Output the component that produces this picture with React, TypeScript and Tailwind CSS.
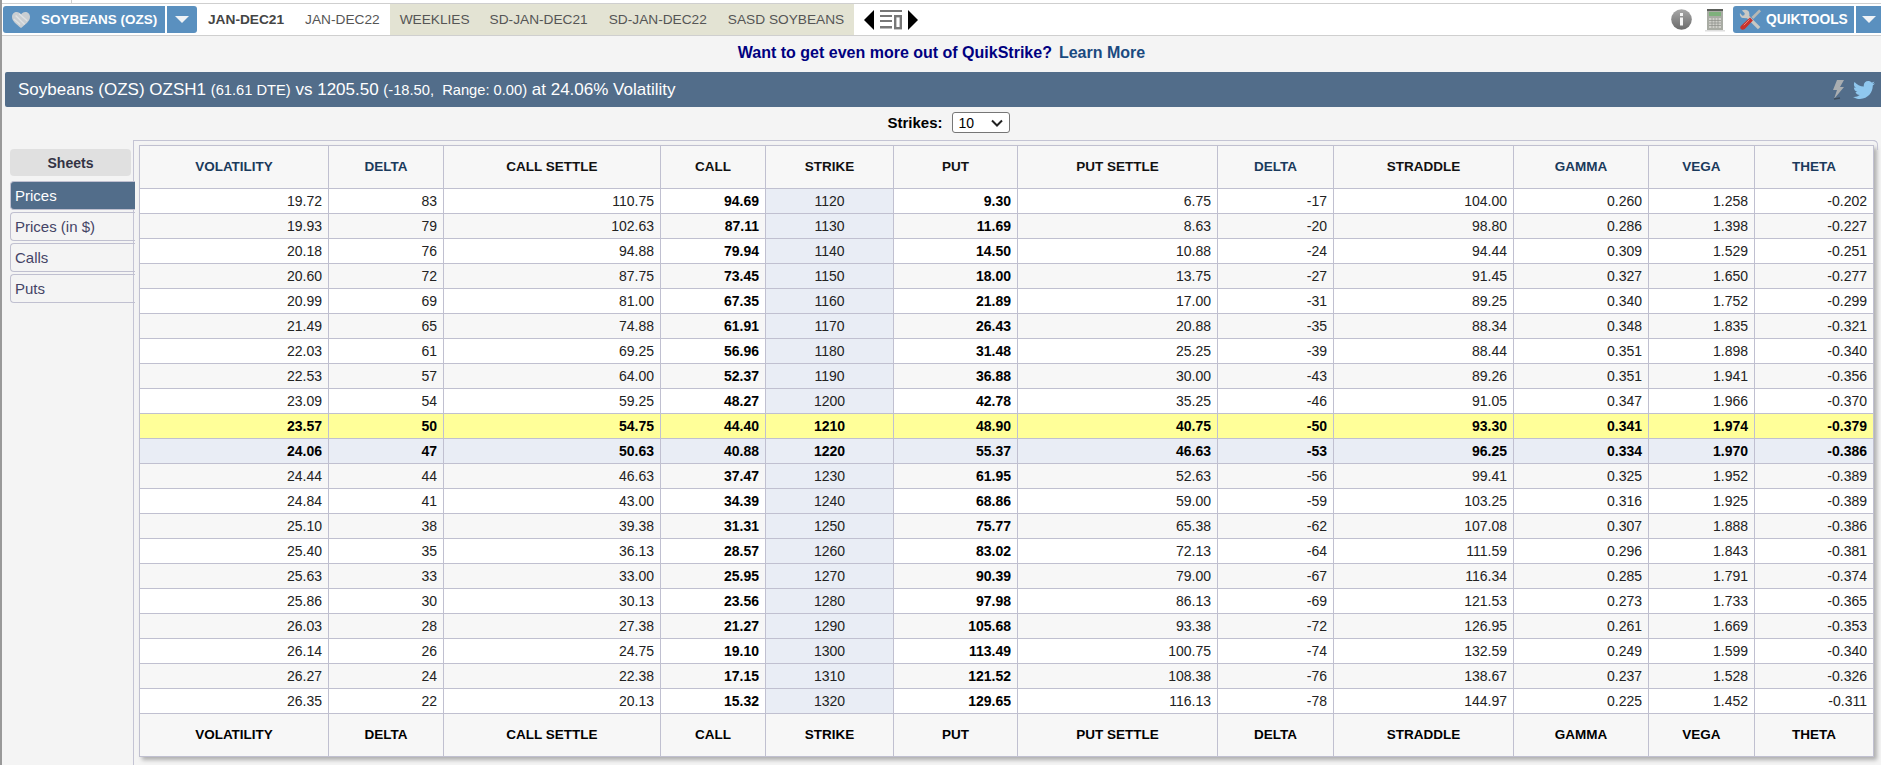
import React from "react";
import { FaTwitter } from "react-icons/fa";

const rows: string[][] = [
  ["19.72","83","110.75","94.69","1120","9.30","6.75","-17","104.00","0.260","1.258","-0.202"],
  ["19.93","79","102.63","87.11","1130","11.69","8.63","-20","98.80","0.286","1.398","-0.227"],
  ["20.18","76","94.88","79.94","1140","14.50","10.88","-24","94.44","0.309","1.529","-0.251"],
  ["20.60","72","87.75","73.45","1150","18.00","13.75","-27","91.45","0.327","1.650","-0.277"],
  ["20.99","69","81.00","67.35","1160","21.89","17.00","-31","89.25","0.340","1.752","-0.299"],
  ["21.49","65","74.88","61.91","1170","26.43","20.88","-35","88.34","0.348","1.835","-0.321"],
  ["22.03","61","69.25","56.96","1180","31.48","25.25","-39","88.44","0.351","1.898","-0.340"],
  ["22.53","57","64.00","52.37","1190","36.88","30.00","-43","89.26","0.351","1.941","-0.356"],
  ["23.09","54","59.25","48.27","1200","42.78","35.25","-46","91.05","0.347","1.966","-0.370"],
  ["23.57","50","54.75","44.40","1210","48.90","40.75","-50","93.30","0.341","1.974","-0.379"],
  ["24.06","47","50.63","40.88","1220","55.37","46.63","-53","96.25","0.334","1.970","-0.386"],
  ["24.44","44","46.63","37.47","1230","61.95","52.63","-56","99.41","0.325","1.952","-0.389"],
  ["24.84","41","43.00","34.39","1240","68.86","59.00","-59","103.25","0.316","1.925","-0.389"],
  ["25.10","38","39.38","31.31","1250","75.77","65.38","-62","107.08","0.307","1.888","-0.386"],
  ["25.40","35","36.13","28.57","1260","83.02","72.13","-64","111.59","0.296","1.843","-0.381"],
  ["25.63","33","33.00","25.95","1270","90.39","79.00","-67","116.34","0.285","1.791","-0.374"],
  ["25.86","30","30.13","23.56","1280","97.98","86.13","-69","121.53","0.273","1.733","-0.365"],
  ["26.03","28","27.38","21.27","1290","105.68","93.38","-72","126.95","0.261","1.669","-0.353"],
  ["26.14","26","24.75","19.10","1300","113.49","100.75","-74","132.59","0.249","1.599","-0.340"],
  ["26.27","24","22.38","17.15","1310","121.52","108.38","-76","138.67","0.237","1.528","-0.326"],
  ["26.35","22","20.13","15.32","1320","129.65","116.13","-78","144.97","0.225","1.452","-0.311"],
];

const headers = ["VOLATILITY","DELTA","CALL SETTLE","CALL","STRIKE","PUT","PUT SETTLE","DELTA","STRADDLE","GAMMA","VEGA","THETA"];
const colClasses = ["w-[189px]","w-[115px]","w-[217px]","w-[105px]","w-[128px]","w-[124px]","w-[200px]","w-[116px]","w-[180px]","w-[135px]","w-[106px]","w-[119px]"];

function Caret() {
  return <span className="block w-0 h-0 border-l-[7px] border-r-[7px] border-t-[7px] border-l-transparent border-r-transparent border-t-[#eef2f6]" />;
}

function Heart() {
  return (
    <svg width="20" height="18" viewBox="0 0 22 20" className="shrink-0">
      <path d="M11 19C6 15 1 11.500 1 6.500 1 3 3.500 1 6.200 1 8.300 1 10 2 11 3.800 12 2 13.700 1 15.800 1 18.500 1 21 3 21 6.500 21 11.500 16 15 11 19Z" fill="#c9ced2" />
      <path d="M5 5L15 15M9 3L18 11M3 9L10 15" stroke="#dfe2e4" strokeWidth="1.500" />
    </svg>
  );
}

function Tools() {
  return (
    <svg width="23" height="23" viewBox="0 0 24 24" className="shrink-0">
      <path d="M8 8L21 21" stroke="#c8c8c4" strokeWidth="3.500" />
      <path d="M3 2.500L6 5.500 5.500 7.500 3.500 8 1 5.200C0.500 8 2 10.500 5 10.500L8 10.800 11 7.500 10.500 4.500C10 2 6.500 1 3 2.500Z" fill="#c8c8c4" />
      <path d="M21 1.500L23 3.500 15 11.500 13 9.500Z" fill="#b8b8b4" />
      <path d="M11.500 10L14.500 13 6 21.800C5 22.800 3 23 2 22 1 21 1.200 19.500 2.200 18.500Z" fill="#c8322c" />
      <path d="M5 18L11 12" stroke="#ec8a80" strokeWidth="1" />
    </svg>
  );
}

function Info() {
  return (
    <svg width="21" height="21" viewBox="0 0 21 21" className="shrink-0">
      <defs>
        <linearGradient id="infoGrad" x1="0" y1="0" x2="0" y2="1">
          <stop offset="0" stopColor="#a8a8a8" />
          <stop offset="1" stopColor="#6a6a6a" />
        </linearGradient>
      </defs>
      <circle cx="10.500" cy="10.500" r="10.300" fill="url(#infoGrad)" />
      <rect x="9" y="4" width="3" height="3" fill="#f4f4f4" />
      <rect x="9" y="8.500" width="3" height="8" fill="#f4f4f4" />
    </svg>
  );
}

function Calculator() {
  return (
    <svg width="20" height="24" viewBox="0 0 20 24" className="shrink-0">
      <rect x="2" y="1" width="16" height="21" fill="#a9aca4" />
      <rect x="2" y="1" width="16" height="2" fill="#5c5f5a" />
      <rect x="4" y="4" width="12" height="4" fill="#7fb17c" />
      <path d="M4 10H16V20H4Z" fill="#cfd0ca" />
      <path d="M4 12.500H16M4 15H16M4 17.500H16M7 10V20M10 10V20M13 10V20" stroke="#8b8d87" strokeWidth="0.700" />
      <rect x="0" y="22" width="20" height="1.500" fill="#dedede" />
    </svg>
  );
}

function NavIcons() {
  return (
    <div className="flex items-center ml-[10px]">
      <svg width="11" height="20" viewBox="0 0 11 20"><path d="M10 0V20L0 10Z" fill="#000" /></svg>
      <svg width="22" height="20" viewBox="0 0 22 20" className="mx-[5px]">
        <rect x="0" y="0" width="22" height="2" fill="#777" />
        <rect x="0" y="5" width="12" height="2" fill="#777" />
        <rect x="0" y="10" width="12" height="2" fill="#777" />
        <rect x="0" y="16" width="12" height="2.500" fill="#777" />
        <rect x="15.200" y="6.200" width="5.600" height="12" fill="none" stroke="#777" strokeWidth="2.400" />
      </svg>
      <svg width="11" height="20" viewBox="0 0 11 20"><path d="M1 0V20L11 10Z" fill="#000" /></svg>
    </div>
  );
}

function Bolt() {
  return (
    <svg width="14" height="21" viewBox="0 0 14 21">
      <path d="M6 1H13L9 8H13L3 20 6 11H2Z" fill="#a9adb0" />
      <path d="M3 20L9 19" stroke="#3e4d5c" strokeWidth="1.500" />
    </svg>
  );
}

const tabText = "text-[13.7px] leading-none text-[#555] whitespace-nowrap";

export default function App() {
  return (
    <div className="h-[765px] w-full overflow-hidden bg-[#f4f4f4] border-l-2 border-[#999] font-['Liberation_Sans',Arial,sans-serif] text-black">
      <div className="h-[3px] bg-white pl-[69px]">
        <div className="h-full w-px bg-[#cfcfcf]" />
      </div>
      <div className="h-[33px] bg-white border-y border-[#cfcfcf] flex items-stretch">
        <div className="flex items-center gap-[2px] pl-px h-[27px] mt-[2px]">
          <div className="flex items-center h-full w-[162px] bg-[#5a90bf] rounded-l-[3px] pl-[8px] gap-[10px]">
            <Heart />
            <span className="text-[13.5px] font-bold text-white leading-none whitespace-nowrap">SOYBEANS (OZS)</span>
          </div>
          <div className="flex items-center justify-center h-full w-[30px] bg-[#5a90bf] rounded-r-[3px]"><Caret /></div>
        </div>
        <div className="flex items-center pl-[11px] h-full">
          <span className="text-[13.7px] leading-none font-bold text-[#444] whitespace-nowrap">JAN-DEC21</span>
          <span className={`${tabText} ml-[21px]`}>JAN-DEC22</span>
        </div>
        <div className="flex items-center gap-[20px] bg-[#e3e3d3] ml-[10px] pl-[10px] pr-[10px] h-full">
          <span className={tabText}>WEEKLIES</span>
          <span className={tabText}>SD-JAN-DEC21</span>
          <span className={`${tabText} ml-px`}>SD-JAN-DEC22</span>
          <span className={`${tabText} ml-px`}>SASD SOYBEANS</span>
        </div>
        <NavIcons />
        <div className="ml-auto flex items-center">
          <Info />
          <span className="ml-[13px]"><Calculator /></span>
          <div className="flex items-center h-[27px] w-[121px] ml-[8px] bg-[#5a90bf] rounded-l-[3px] pl-[6px] gap-[4px]">
            <Tools />
            <span className="text-[13.8px] font-bold text-white leading-none whitespace-nowrap">QUIKTOOLS</span>
          </div>
          <div className="flex items-center justify-center h-[27px] w-[25px] ml-[2px] bg-[#5a90bf]"><Caret /></div>
        </div>
      </div>

      <div className="h-[36px] pb-[3px] flex items-center justify-center text-[16px] font-bold text-[#000080] leading-none">
        <span>Want to get even more out of QuikStrike?</span>
        <span className="ml-[7px] text-[#1a4a80]">Learn More</span>
      </div>

      <div className="ml-[3px] h-[35px] bg-[#526d8a] rounded-l-[2px] flex items-center pl-[13px] pr-[6px] text-white">
        <span className="text-[17px] leading-none whitespace-nowrap">Soybeans (OZS) OZSH1 <span className="text-[14.7px]">(61.61 DTE)</span> vs 1205.50 <span className="text-[14.7px]">(-18.50,&nbsp; Range: 0.00)</span> at 24.06% Volatility</span>
        <span className="ml-auto flex items-center gap-[8px]">
          <Bolt />
          <FaTwitter className="text-[#8fc7ee] w-[22px] h-[22px]" />
        </span>
      </div>

      <div className="h-[33px] pl-[14px] pb-[2px] flex items-center justify-center gap-[9px]">
        <span className="text-[15px] font-bold leading-none">Strikes:</span>
        <div className="h-[21px] w-[58px] border border-[#767676] rounded-[3px] bg-white flex items-center justify-between pl-[6px] pr-[6px]">
          <span className="text-[14px] leading-none">10</span>
          <svg width="12" height="8" viewBox="0 0 12 8"><path d="M1 1.500L6 6.500 11 1.500" fill="none" stroke="#222" strokeWidth="2" /></svg>
        </div>
      </div>

      <div className="flex items-start">
        <div className="w-[131px] shrink-0 pl-[8px] pt-[9px]">
          <div className="h-[27px] w-[121px] bg-[#e0e0e0] rounded-[4px] flex items-center justify-center text-[14px] font-bold text-[#333344] leading-none">Sheets</div>
          <div className="mt-[5px] flex flex-col gap-[2px] w-[125px] text-[15px] leading-none relative z-10">
            <div className="h-[29px] bg-[#526d8a] text-white rounded-l-[4px] border border-r-0 border-[#c0c0d0] flex items-center pl-[4px]">Prices</div>
            <div className="h-[29px] text-[#444466] rounded-l-[4px] border border-r-0 border-[#c0c0d0] flex items-center pl-[4px]">Prices (in $)</div>
            <div className="h-[29px] text-[#444466] rounded-l-[4px] border border-r-0 border-[#c0c0d0] flex items-center pl-[4px]">Calls</div>
            <div className="h-[29px] text-[#444466] rounded-l-[4px] border border-r-0 border-[#c0c0d0] flex items-center pl-[4px]">Puts</div>
          </div>
        </div>
        <div className="flex-1 mr-[3px] border-l border-t border-[#c4c4d4] rounded-tr-[5px] h-[700px] pl-[5px] pt-[4px] relative">
          <div className="absolute right-0 top-[-1px] w-[8px] h-[10px] border-t border-r border-[#c4c4d4] rounded-tr-[5px]" />
          <table className="table-fixed w-[1735px] border-collapse shadow-[3px_3px_4px_rgba(0,0,0,0.28)] text-[14px] text-[#222]">
            <colgroup>
              {colClasses.map((c, i) => <col key={i} className={c} />)}
            </colgroup>
            <thead>
              <tr className="h-[43px] bg-[#f7f7f7]">
                {headers.map((h, i) => (
                  <th key={i} className={`border border-[#c0c0d0] text-[13.5px] font-bold text-center p-0 ${i === 3 || i === 5 || i === 4 || i === 6 || i === 8 || i === 2 ? "text-[#111]" : "text-[#1a3a5c]"}`}>{h}</th>
                ))}
              </tr>
            </thead>
            <tbody>
              {rows.map((r, ri) => {
                const yellow = ri === 9;
                const blue = ri === 10;
                const rowBg = yellow ? "bg-[#ffff99] font-bold text-black" : blue ? "bg-[#e9edf5] font-bold text-black" : ri % 2 === 0 ? "bg-white" : "bg-[#f7f7f7]";
                return (
                  <tr key={ri} className={`h-[25px] ${rowBg}`}>
                    {r.map((v, ci) => {
                      const strike = ci === 4;
                      const bold = ci === 3 || ci === 5;
                      const cls = strike
                        ? `text-center ${yellow || blue ? "" : "bg-[#e9edf5]"}`
                        : `text-right pr-[6px] ${bold ? "font-bold text-black" : ""}`;
                      return <td key={ci} className={`border border-[#c0c0d0] p-0 leading-none ${cls}`}>{v}</td>;
                    })}
                  </tr>
                );
              })}
            </tbody>
            <tfoot>
              <tr className="h-[43px] bg-[#f7f7f7]">
                {headers.map((h, i) => (
                  <th key={i} className="border border-[#c0c0d0] text-[13.5px] font-bold text-center p-0 text-black">{h}</th>
                ))}
              </tr>
            </tfoot>
          </table>
        </div>
      </div>
    </div>
  );
}
